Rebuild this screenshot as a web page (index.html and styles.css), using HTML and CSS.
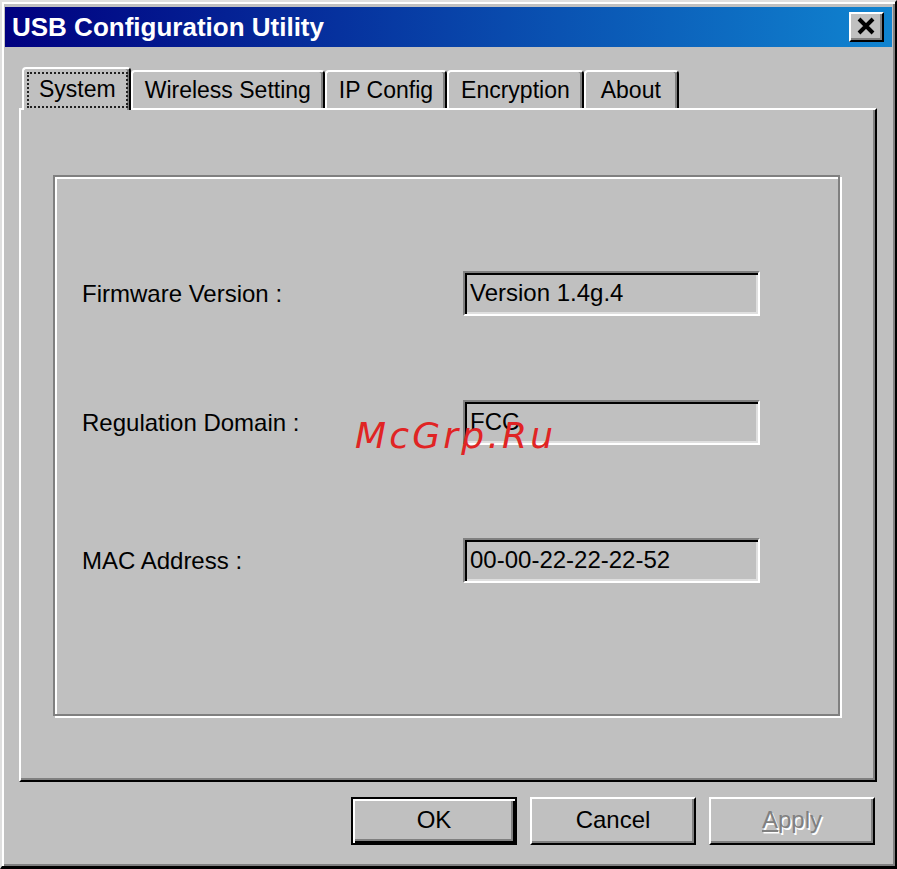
FILE: index.html
```html
<!DOCTYPE html>
<html lang="en">
<head>
    <title>USB Configuration Utility</title>
    <meta charset="UTF-8">
    <link rel="stylesheet" href="styles.css">
</head>

<body>
    <div class="window">
        <div class="titlebar">
            <span class="title">USB Configuration Utility</span>
            <div class="closebtn">
                <svg width="20" height="18" viewBox="0 0 20 18">
                    <path d="M3 2 L17 16 M17 2 L3 16" stroke="#000" stroke-width="4" fill="none"/>
                </svg>
            </div>
        </div>

        <div class="content">
            <div class="tabs">
                <div class="tab tab-active"><span class="focus">System</span></div>
                <div class="tab">Wireless Setting</div>
                <div class="tab">IP Config</div>
                <div class="tab">Encryption</div>
                <div class="tab tab-about">About</div>
            </div>

            <div class="panel">
                <div class="group">
                    <div class="row">
                        <div class="label">Firmware Version :</div>
                        <div class="field">Version 1.4g.4</div>
                    </div>
                    <div class="row row-domain">
                        <div class="label">Regulation Domain :</div>
                        <div class="field">FCC</div>
                    </div>
                    <div class="row row-mac">
                        <div class="label">MAC Address :</div>
                        <div class="field">00-00-22-22-22-52</div>
                    </div>
                </div>
            </div>

            <div class="buttons">
                <div class="btn btn-default"><div class="btn-face">OK</div></div>
                <div class="btn"><div class="btn-face">Cancel</div></div>
                <div class="btn btn-disabled"><div class="btn-face"><u>A</u>pply</div></div>
            </div>
        </div>

        <div class="watermark">McGrp.Ru</div>
    </div>
</body>
</html>
```

FILE: styles.css
```css
body {
    margin: 0;
    background: #c0c0c0;
    font-family: "Liberation Sans", Arial, sans-serif;
    color: #000;
}

.window {
    position: relative;
    width: 897px;
    height: 869px;
    box-sizing: border-box;
    background: #c0c0c0;
    border-top: 2px solid #dfdfdf;
    border-left: 2px solid #dfdfdf;
    border-right: 2px solid #000;
    border-bottom: 3px solid #000;
    box-shadow: inset 2px 2px 0 #fff, inset -2px -2px 0 #808080;
    padding: 5px 3px 0 3px;
}

.titlebar {
    height: 40px;
    display: flex;
    align-items: center;
    justify-content: space-between;
    padding: 0 8px 0 7px;
    background: linear-gradient(to right, #000080, #1084d0);
}

.title {
    color: #fff;
    font-weight: bold;
    font-size: 26px;
}

.closebtn {
    width: 35px;
    height: 30px;
    box-sizing: border-box;
    background: #c0c0c0;
    border-top: 2px solid #fff;
    border-left: 2px solid #fff;
    border-right: 2px solid #000;
    border-bottom: 2px solid #000;
    box-shadow: inset -2px -2px 0 #808080;
    display: flex;
    align-items: center;
    justify-content: center;
}

.closebtn svg {
    margin: 0 2px 2px 0;
}

.content {
    padding: 0 15px 0 14px;
}

.tabs {
    display: flex;
    align-items: flex-end;
    margin-top: 20px;
    padding-left: 3px;
}

.tab {
    height: 38px;
    box-sizing: border-box;
    padding: 0 12px;
    font-size: 23px;
    display: flex;
    align-items: center;
    border-top: 2px solid #fff;
    border-left: 2px solid #fff;
    border-right: 2px solid #000;
    border-radius: 4px 4px 0 0;
    box-shadow: inset -2px 0 0 #808080;
}

.tab-about {
    padding: 0 16px 0 15px;
}

.tab-active {
    position: relative;
    z-index: 1;
    height: 43px;
    margin-bottom: -2px;
    padding: 3px 1px 2px 3px;
    background: #c0c0c0;
}

.focus {
    display: flex;
    align-items: center;
    height: 100%;
    box-sizing: border-box;
    padding: 0 10px 2px 10px;
    border: 2px dotted #202020;
}

.panel {
    height: 674px;
    box-sizing: border-box;
    display: flex;
    flex-direction: column;
    padding: 65px 35px 64px 32px;
    border-top: 2px solid #fff;
    border-left: 2px solid #fff;
    border-right: 2px solid #000;
    border-bottom: 2px solid #000;
    box-shadow: inset -2px -2px 0 #808080;
}

.group {
    flex: 1;
    border: 2px solid #808080;
    box-shadow: inset 2px 2px 0 #fff, 2px 2px 0 #fff;
    padding: 94px 0 0 27px;
}

.row {
    display: flex;
    align-items: center;
    height: 45px;
}

.row-domain {
    margin-top: 84px;
}

.row-mac {
    margin-top: 93px;
}

.label {
    width: 381px;
    font-size: 24px;
}

.field {
    width: 297px;
    height: 45px;
    box-sizing: border-box;
    font-size: 24px;
    display: flex;
    align-items: center;
    padding: 0 0 2px 5px;
    border-top: 2px solid #808080;
    border-left: 2px solid #808080;
    border-right: 2px solid #fff;
    border-bottom: 2px solid #fff;
    box-shadow: inset 2px 2px 0 #000, inset -2px -2px 0 #dfdfdf;
}

.buttons {
    display: flex;
    justify-content: flex-end;
    gap: 13px;
    margin-top: 15px;
    padding-right: 2px;
}

.btn {
    width: 166px;
    height: 48px;
    box-sizing: border-box;
    border-top: 2px solid #fff;
    border-left: 2px solid #fff;
    border-right: 2px solid #000;
    border-bottom: 2px solid #000;
    box-shadow: inset -2px -2px 0 #808080;
}

.btn-face {
    height: 100%;
    display: flex;
    align-items: center;
    justify-content: center;
    font-size: 24px;
    padding-bottom: 2px;
    box-sizing: border-box;
}

.btn-default {
    border: 2px solid #000;
    box-shadow: inset 2px 2px 0 #fff, inset -2px -2px 0 #000, inset -4px -4px 0 #808080;
}

.btn-disabled {
    color: #808080;
    text-shadow: 1.5px 1.5px 0 #fff;
}

.btn-disabled u {
    text-decoration-color: #808080;
}

.watermark {
    position: absolute;
    left: 353px;
    top: 416px;
    font-family: "DejaVu Sans", sans-serif;
    font-style: italic;
    font-size: 36px;
    line-height: 36px;
    letter-spacing: 3.2px;
    color: #e02424;
}
```
